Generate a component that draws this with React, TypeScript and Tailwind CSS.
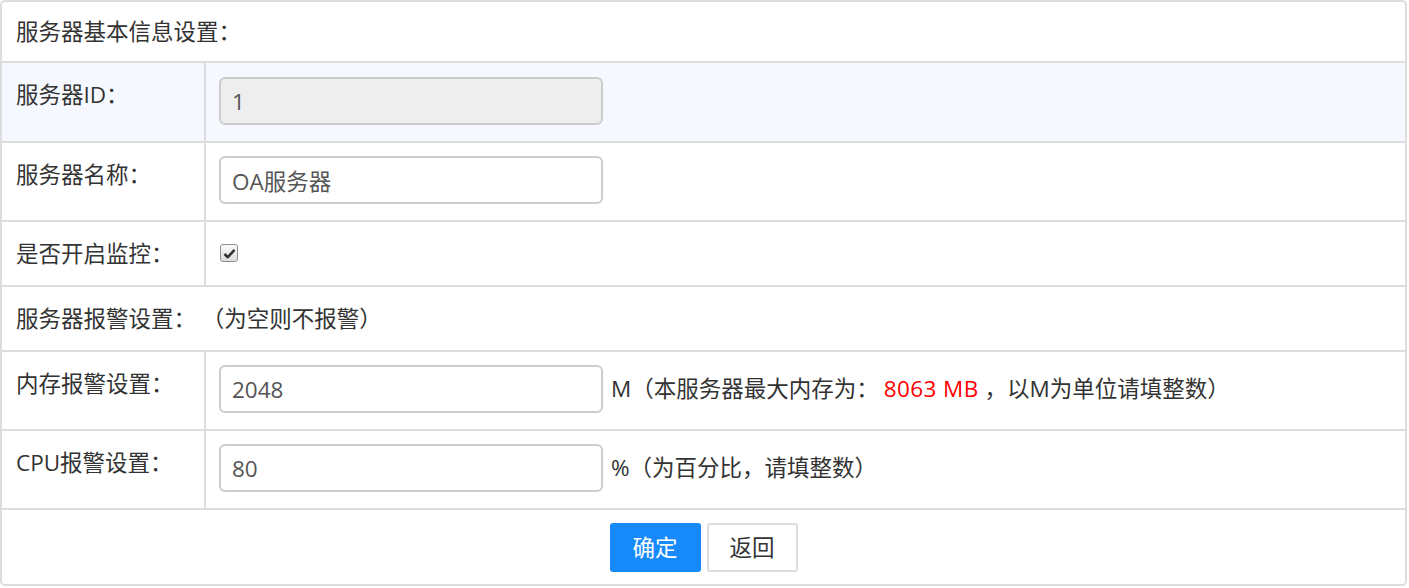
import React from 'react';

const font = "font-['Open_Sans','Noto_Sans_CJK_SC',sans-serif]";

function Label({ children }: { children: React.ReactNode }) {
  return (
    <div className="w-[204px] shrink-0 border-r-2 border-[#ddd] pl-[14px] pt-[18px] leading-[28px]">
      {children}
    </div>
  );
}

function TextInput({ value, disabled }: { value: string; disabled?: boolean }) {
  return (
    <input
      defaultValue={value}
      disabled={disabled}
      className={`w-[384px] h-[48px] rounded-[6px] border-2 border-[#ccc] pl-[11px] text-[22.5px] text-[#555] outline-none ${font} ${
        disabled ? 'bg-[#eee]' : 'bg-white'
      }`}
    />
  );
}

function Checked() {
  return (
    <span className="mt-[22px] flex h-[18px] w-[18px] items-center justify-center rounded-[3px] border border-[#8f8f8f] bg-gradient-to-b from-[#fafafa] to-[#dcdcdc]">
      <svg width="13" height="11" viewBox="0 0 13 11">
        <path d="M1.5 6 L4.8 9.2 L11.5 1.8" fill="none" stroke="#333" strokeWidth="2.6" strokeLinejoin="round" />
      </svg>
    </span>
  );
}

export default function App() {
  return (
    <div className={`w-[1409px] h-[588px] bg-white ${font}`}>
      <div className="w-[1407px] overflow-hidden rounded-[5px] border-2 border-[#ddd] text-[22.5px] text-[#333]">
        {/* 标题 */}
        <div className="h-[61px] border-b-2 border-[#ddd] pl-[14px] pt-[16px] leading-[28px]">服务器基本信息设置：</div>

        <div className="flex h-[80px] border-b-2 border-[#ddd] bg-[#f5f9ff]">
          <Label>服务器ID：</Label>
          <div className="pl-[13px] pt-[14px]">
            <TextInput value="1" disabled />
          </div>
        </div>

        <div className="flex h-[79px] border-b-2 border-[#ddd]">
          <Label>服务器名称：</Label>
          <div className="pl-[13px] pt-[13px]">
            <TextInput value="OA服务器" />
          </div>
        </div>

        <div className="flex h-[65px] border-b-2 border-[#ddd]">
          <Label>是否开启监控：</Label>
          <div className="pl-[14px]">
            <Checked />
          </div>
        </div>

        <div className="h-[65px] border-b-2 border-[#ddd] pl-[14px] pt-[18px] leading-[28px]">
          服务器报警设置： （为空则不报警）
        </div>

        <div className="flex h-[79px] border-b-2 border-[#ddd]">
          <Label>内存报警设置：</Label>
          <div className="flex items-center gap-[8px] self-start pl-[13px] pt-[13px]">
            <TextInput value="2048" />
            <span>
              M（本服务器最大内存为：<span className="ml-[5px] tracking-[0.4px] text-[#ff0000]">8063 MB</span> ，以M为单位请填整数）
            </span>
          </div>
        </div>

        <div className="flex h-[79px] border-b-2 border-[#ddd]">
          <Label>CPU报警设置：</Label>
          <div className="flex items-center gap-[8px] self-start pl-[13px] pt-[13px]">
            <TextInput value="80" />
            <span>%（为百分比，请填整数）</span>
          </div>
        </div>

        <div className="flex h-[74px] justify-center gap-[6px] pt-[13px]">
          <button className="h-[49px] w-[91px] rounded-[3px] bg-[#168afb] text-[22.5px] text-white">确定</button>
          <button className="h-[49px] w-[91px] rounded-[3px] border-2 border-[#ddd] bg-white text-[22.5px] text-[#333]">
            返回
          </button>
        </div>
      </div>
    </div>
  );
}
